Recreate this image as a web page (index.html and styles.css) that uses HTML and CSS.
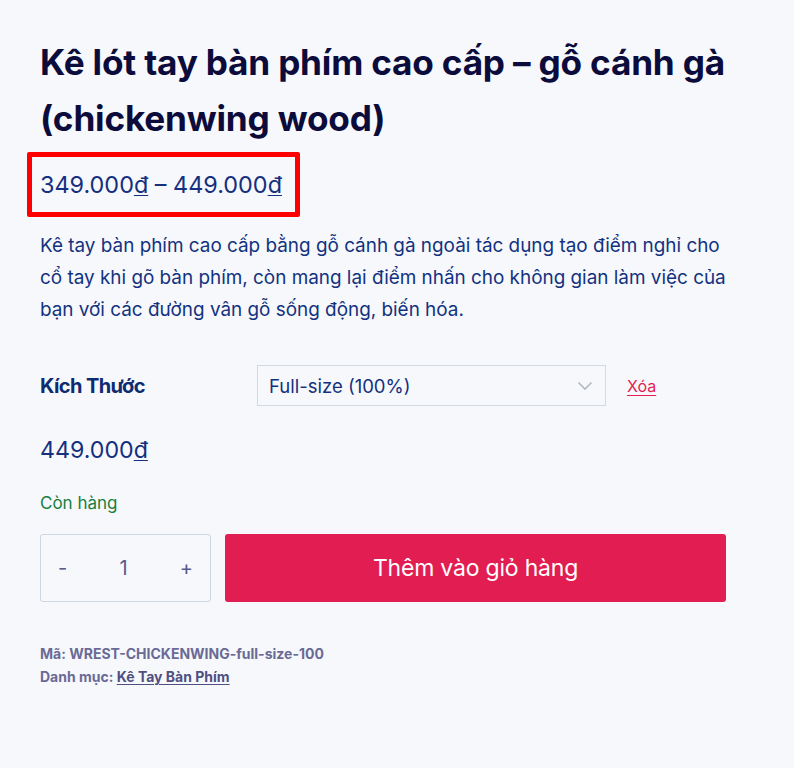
FILE: index.html
```html
<!DOCTYPE html>
<html lang="vi">
<head>
<meta charset="utf-8">
<link rel="stylesheet" href="styles.css">
</head>
<body>
<main class="product">
  <h1 class="title">Kê lót tay bàn phím cao cấp – gỗ cánh gà (chickenwing wood)</h1>
  <div class="price-range"><span>349.000<u>đ</u> – 449.000<u>đ</u></span></div>
  <p class="desc">Kê tay bàn phím cao cấp bằng gỗ cánh gà ngoài tác dụng tạo điểm nghỉ cho cổ tay khi gõ bàn phím, còn mang lại điểm nhấn cho không gian làm việc của bạn với các đường vân gỗ sống động, biến hóa.</p>
  <div class="variant">
    <div class="variant-label">Kích Thước</div>
    <div class="select">
      <span>Full-size (100%)</span>
      <svg class="chev" width="16" height="10" viewBox="0 0 16 10"><path d="M1.5 1.5 L8 8 L14.5 1.5" fill="none" stroke="#b4b9c2" stroke-width="1.6"/></svg>
    </div>
    <a class="clear" href="#">Xóa</a>
  </div>
  <div class="price">449.000<u>đ</u></div>
  <div class="stock">Còn hàng</div>
  <div class="cart">
    <div class="qty">
      <span class="qbtn">-</span>
      <span class="qval">1</span>
      <span class="qbtn">+</span>
    </div>
    <button class="add">Thêm vào giỏ hàng</button>
  </div>
  <div class="meta">
    <div>Mã: WREST-CHICKENWING-full-size-100</div>
    <div>Danh mục: <a href="#">Kê Tay Bàn Phím</a></div>
  </div>
</main>
</body>
</html>
```
FILE: styles.css
```css
html, body {
  margin: 0;
  background: #f7f8fb;
}
body {
  font-family: Inter, "Noto Sans", sans-serif;
  color: #0f2a74;
}
.product {
  width: 686px;
  padding: 34px 0 0 40px;
}
.title {
  margin: 0;
  font-size: 35.2px;
  line-height: 56px;
  font-weight: 700;
  color: #0c0c3c;
  letter-spacing: -0.2px;
}
.price-range {
  margin: 6px 0 0 -13px;
  width: 255px;
  height: 55px;
  border: 5px solid #ff0000;
  border-radius: 2px;
  display: flex;
  align-items: center;
  padding-left: 8px;
  font-size: 23.4px;
  color: #14307e;
}
.price-range u, .price u {
  text-decoration-thickness: 1px;
  text-underline-offset: 2px;
}
.desc {
  margin: 13px 0 0;
  font-size: 18.9px;
  line-height: 32px;
  color: #123280;
}
.variant {
  margin-top: 39px;
  display: flex;
  align-items: center;
}
.variant-label {
  width: 217px;
  font-weight: 700;
  font-size: 20px;
  color: #0e2a72;
  letter-spacing: -0.6px;
}
.select {
  box-sizing: border-box;
  width: 349px;
  height: 41px;
  border: 1px solid #d2d9e3;
  padding: 0 12px 0 11px;
  display: flex;
  align-items: center;
  justify-content: space-between;
  font-size: 18.5px;
  color: #13307d;
}
.clear {
  margin-left: 21px;
  font-size: 16px;
  color: #e31e52;
  text-underline-offset: 3px;
}
.price {
  margin-top: 30px;
  font-size: 23.2px;
  line-height: 28px;
  color: #14307e;
}
.stock {
  margin-top: 29px;
  font-size: 17px;
  line-height: 20px;
  color: #168040;
}
.cart {
  margin-top: 21px;
  display: flex;
  gap: 14px;
}
.qty {
  box-sizing: border-box;
  width: 171px;
  height: 68px;
  border: 1px solid #cdd6e3;
  border-radius: 3px;
  display: flex;
  align-items: center;
  justify-content: space-between;
  padding: 0 17px 0 17px;
  color: #5a5a8c;
  font-size: 20px;
}
.add {
  width: 501px;
  height: 68px;
  border: none;
  border-radius: 3px;
  background: #e21d51;
  color: #fff;
  font-family: Inter, "Noto Sans", sans-serif;
  font-size: 23px;
  letter-spacing: -0.2px;
}
.meta {
  margin-top: 40px;
  font-size: 14px;
  font-weight: 700;
  line-height: 23px;
  color: #6a6a96;
}
.meta a {
  color: #4f4f82;
  text-underline-offset: 2px;
}
```
